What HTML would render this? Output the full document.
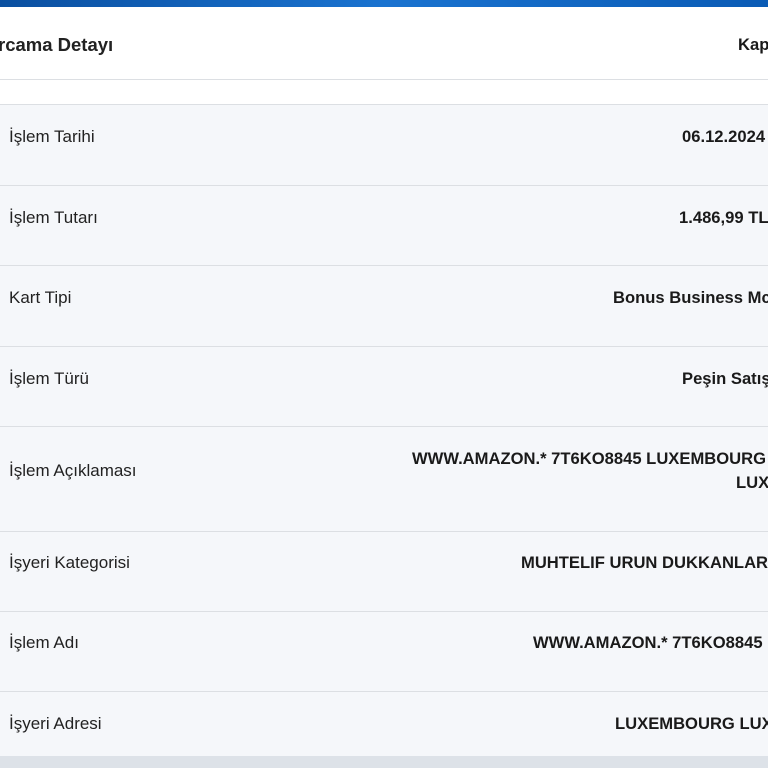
<!DOCTYPE html>
<html><head><meta charset="utf-8"><style>
*{margin:0;padding:0;box-sizing:border-box}
body{width:768px;height:768px;overflow:hidden;background:#fff;font-family:"Liberation Sans",sans-serif;color:#1a1a1a;position:relative}
.bar{position:absolute;left:0;top:0;width:768px;height:7px;background:linear-gradient(90deg,#0a4fa0,#1a73d0,#0a5bb5)}
.hl{position:absolute;left:0;width:768px;height:1px;background:#dcdfe3}
.bg{position:absolute;left:0;top:105px;width:768px;height:651px;background:#f5f7fa}
.foot{position:absolute;left:0;top:756px;width:768px;height:12px;background:#dde2e8}
.t{position:absolute;white-space:nowrap;font-size:17px;line-height:20px}
.l{left:9px;color:#222}
.v{font-weight:bold;font-size:16.6px}
</style></head><body>
<div class="bar"></div>
<div class="t" style="left:-2px;top:34px;font-size:18.5px;line-height:22px;font-weight:bold;color:#222">rcama Detayı</div>
<div class="t v" style="left:738px;top:35px;font-size:16.6px">Kap</div>
<div class="hl" style="top:79px"></div>
<div class="bg"></div>
<div class="hl" style="top:104px"></div>
<div class="hl" style="top:185px"></div>
<div class="hl" style="top:265px"></div>
<div class="hl" style="top:346px"></div>
<div class="hl" style="top:426px"></div>
<div class="hl" style="top:531px"></div>
<div class="hl" style="top:611px"></div>
<div class="hl" style="top:691px"></div>
<div class="foot"></div>

<div class="t l" style="top:127px">İşlem Tarihi</div>
<div class="t v" style="left:682px;top:127px">06.12.2024</div>
<div class="t l" style="top:208px">İşlem Tutarı</div>
<div class="t v" style="left:679px;top:208px">1.486,99 TL</div>
<div class="t l" style="top:288px">Kart Tipi</div>
<div class="t v" style="left:613px;top:288px">Bonus Business Mc</div>
<div class="t l" style="top:369px">İşlem Türü</div>
<div class="t v" style="left:682px;top:369px">Peşin Satış</div>
<div class="t l" style="top:461px">İşlem Açıklaması</div>
<div class="t v" style="left:412px;top:449px">WWW.AMAZON.* 7T6KO8845 LUXEMBOURG</div>
<div class="t v" style="left:736px;top:473px">LUX</div>
<div class="t l" style="top:553px">İşyeri Kategorisi</div>
<div class="t v" style="left:521px;top:553px">MUHTELIF URUN DUKKANLARI</div>
<div class="t l" style="top:633px">İşlem Adı</div>
<div class="t v" style="left:533px;top:633px">WWW.AMAZON.* 7T6KO8845</div>
<div class="t l" style="top:714px">İşyeri Adresi</div>
<div class="t v" style="left:615px;top:714px">LUXEMBOURG LUX</div>
</body></html>
